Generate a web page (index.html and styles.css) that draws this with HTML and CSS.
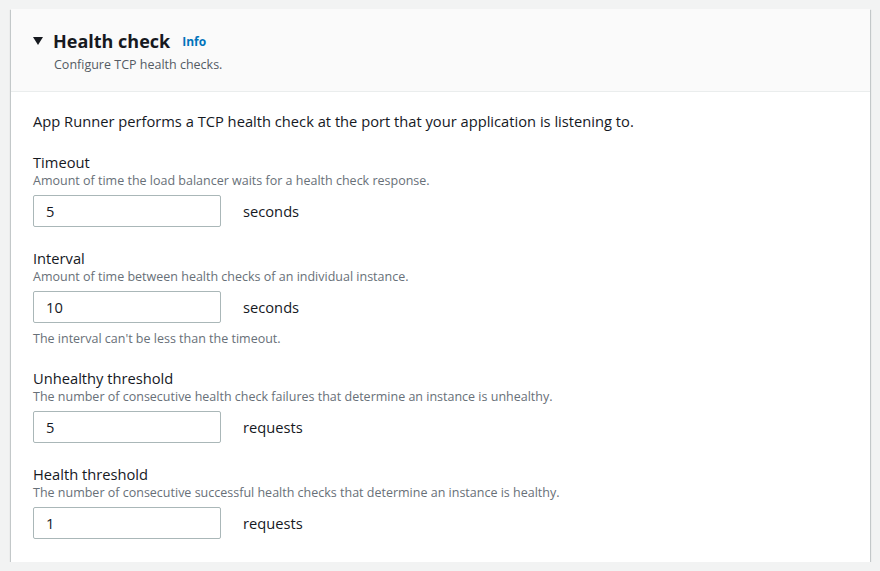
FILE: index.html
```html
<!DOCTYPE html>
<html lang="en">
<head>
    <meta charset="UTF-8">
    <meta name="viewport" content="width=device-width, initial-scale=1.0">
    <title>Health check</title>
    <link rel="stylesheet" href="styles.css">
</head>
<body>
    <div class="container">
        <div class="header">
            <h2 class="title">
                <span class="caret"></span>
                Health check
                <a class="info" href="#">Info</a>
            </h2>
            <p class="subtitle">Configure TCP health checks.</p>
        </div>
        <div class="content">
            <p class="intro">App Runner performs a TCP health check at the port that your application is listening to.</p>

            <div class="form-group">
                <label for="timeout">Timeout</label>
                <p class="desc">Amount of time the load balancer waits for a health check response.</p>
                <div class="input-row">
                    <input type="text" id="timeout" value="5">
                    <span class="unit">seconds</span>
                </div>
            </div>

            <div class="form-group">
                <label for="interval">Interval</label>
                <p class="desc">Amount of time between health checks of an individual instance.</p>
                <div class="input-row">
                    <input type="text" id="interval" value="10">
                    <span class="unit">seconds</span>
                </div>
                <p class="constraint">The interval can't be less than the timeout.</p>
            </div>

            <div class="form-group">
                <label for="unhealthy">Unhealthy threshold</label>
                <p class="desc">The number of consecutive health check failures that determine an instance is unhealthy.</p>
                <div class="input-row">
                    <input type="text" id="unhealthy" value="5">
                    <span class="unit">requests</span>
                </div>
            </div>

            <div class="form-group">
                <label for="healthy">Health threshold</label>
                <p class="desc">The number of consecutive successful health checks that determine an instance is healthy.</p>
                <div class="input-row">
                    <input type="text" id="healthy" value="1">
                    <span class="unit">requests</span>
                </div>
            </div>
        </div>
    </div>
</body>
</html>
```

FILE: styles.css
```css
body {
    font-family: "Open Sans", Arial, sans-serif;
    margin: 0;
    padding: 9px 10px 0 11px;
    background-color: #f2f3f3;
    color: #16191f;
}
.container {
    background: #fff;
    box-shadow: 0 1px 1px 0 rgba(0, 28, 36, 0.3), 1px 1px 1px 0 rgba(0, 28, 36, 0.15), -1px 1px 1px 0 rgba(0, 28, 36, 0.15);
}
.header {
    background: #fafafa;
    border-bottom: 1px solid #eaeded;
    padding: 17px 22px 18px;
}
.title {
    display: flex;
    align-items: center;
    margin: 0;
    font-size: 18px;
    line-height: 26px;
    font-weight: 700;
}
.caret {
    width: 0;
    height: 0;
    border-left: 5.5px solid transparent;
    border-right: 5.5px solid transparent;
    border-top: 8px solid #16191f;
    margin-right: 10px;
    margin-top: 1px;
}
.info {
    font-size: 12px;
    font-weight: 700;
    color: #0073bb;
    text-decoration: none;
    margin-left: 12px;
    margin-top: 3px;
}
.subtitle {
    margin: 2px 0 0 21px;
    font-size: 12.5px;
    line-height: 16px;
    color: #545b64;
}
.content {
    padding: 18px 22px 23px;
}
.intro {
    margin: 0;
    font-size: 14.7px;
    line-height: 22px;
}
.form-group {
    margin-top: 19px;
}
.form-group + .form-group {
    margin-top: 20px;
}
.form-group label {
    display: block;
    font-size: 14.7px;
    line-height: 22px;
}
.desc {
    margin: 0;
    font-size: 12.5px;
    line-height: 16px;
    color: #687078;
}
.input-row {
    display: flex;
    align-items: center;
    margin-top: 6px;
}
.input-row input {
    box-sizing: border-box;
    width: 188px;
    height: 32px;
    padding: 4px 12px;
    border: 1px solid #aab7b8;
    border-radius: 2px;
    font-family: inherit;
    font-size: 14.7px;
    color: #16191f;
    outline: none;
}
.unit {
    margin-left: 22px;
    font-size: 14.7px;
}
.constraint {
    margin: 8px 0 0;
    font-size: 12.5px;
    line-height: 16px;
    color: #687078;
}
```
